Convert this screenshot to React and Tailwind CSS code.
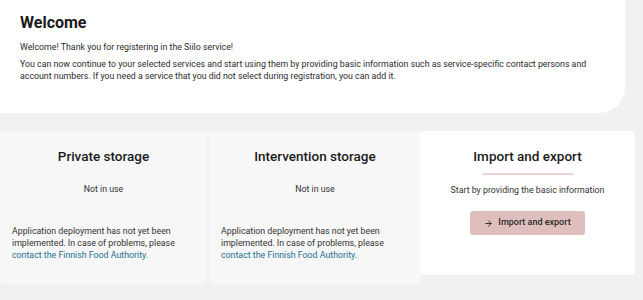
/**
 * App — Siilo welcome page with service cards.
 */
import { ArrowRight } from "lucide-react";

const font = { fontFamily: "Roboto, 'Liberation Sans', sans-serif" };

function StorageCard({ title, className = "" }) {
  return (
    <div
      className={`flex flex-col items-center rounded-b-[6px] bg-[#f7f7f7] pt-[16px] pb-[24px] ${className}`}
    >
      <h2 className="text-[13.5px] leading-[18px] font-medium text-[#1c1c1c]">
        {title}
      </h2>
      <p className="mt-[18px] text-[8.8px] leading-[12px] text-[#333]">Not in use</p>
      <p className="mt-[30px] self-stretch px-[12px] text-[8.8px] leading-[12px] text-[#333]">
        Application deployment has not yet been implemented. In case of problems, please{" "}
        <a href="#" className="text-[#23708f]">
          contact the Finnish Food Authority
        </a>
        .
      </p>
    </div>
  );
}

export default function App() {
  return (
    <div className="min-h-[300px] w-[643px] bg-[#f1f1ef] pb-[14px]" style={font}>
      <section className="w-[625px] rounded-br-[26px] bg-white pl-[20px] pr-[26px] pt-[12px] pb-[31px]">
        <h1 className="text-[16px] leading-[22px] font-bold text-[#1a1a1a]">Welcome</h1>
        <p className="mt-[7px] text-[8.8px] leading-[12px] text-[#2b2b2b]">
          Welcome! Thank you for registering in the Siilo service!
        </p>
        <p className="mt-[5px] text-[8.8px] leading-[12px] text-[#2b2b2b]">
          You can now continue to your selected services and start using them by providing basic
          information such as service-specific contact persons and account numbers. If you need a
          service that you did not select during registration, you can add it.
        </p>
      </section>

      <div className="mt-[18px] flex items-start">
        <StorageCard title="Private storage" className="w-[207px]" />
        <StorageCard title="Intervention storage" className="ml-[2px] w-[212px]" />
        <div className="-ml-[1px] flex w-[215px] flex-col items-center rounded-[5px] bg-white pt-[16px] pb-[40px]">
          <h2 className="text-[13.5px] leading-[18px] font-medium text-[#1c1c1c]">
            Import and export
          </h2>
          <div className="mt-[8px] h-[2px] w-[90px] bg-[#ecd3d2]" />
          <p className="mt-[9px] text-[8.8px] leading-[12px] text-[#333]">
            Start by providing the basic information
          </p>
          <button className="mt-[15px] flex h-[24px] w-[115px] items-center justify-center gap-[5px] rounded-[3px] bg-[#dfbfbd] text-[9px] font-medium text-[#2a2a2a]">
            <ArrowRight size={9} strokeWidth={2.5} />
            Import and export
          </button>
        </div>
      </div>
    </div>
  );
}
